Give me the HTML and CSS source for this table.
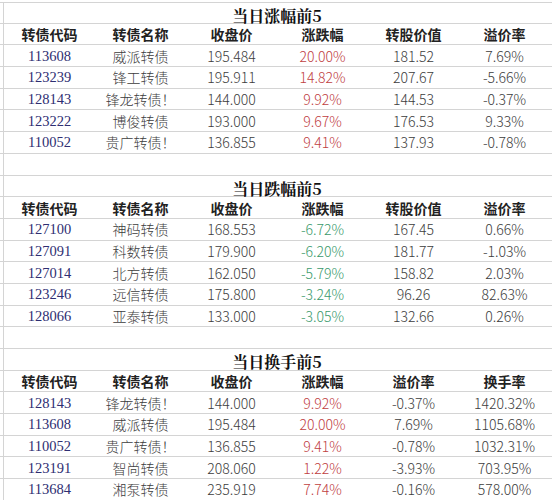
FILE: index.html
```html
<!DOCTYPE html>
<html lang="zh-CN">
<head>
<meta charset="utf-8">
<title>可转债排行</title>
<link rel="stylesheet" href="styles.css">
</head>
<body>
<div class="sheet">
  <div class="row title-row"><div class="gap"></div><div class="title">当日涨幅前5</div></div>
  <div class="row head"><div class="gap"></div><div>转债代码</div><div>转债名称</div><div>收盘价</div><div>涨跌幅</div><div>转股价值</div><div>溢价率</div></div>
  <div class="row"><div class="gap"></div><div class="code">113608</div><div>威派转债</div><div>195.484</div><div class="up">20.00%</div><div>181.52</div><div>7.69%</div></div>
  <div class="row"><div class="gap"></div><div class="code">123239</div><div>锋工转债</div><div>195.911</div><div class="up">14.82%</div><div>207.67</div><div>-5.66%</div></div>
  <div class="row"><div class="gap"></div><div class="code">128143</div><div>锋龙转债！</div><div>144.000</div><div class="up">9.92%</div><div>144.53</div><div>-0.37%</div></div>
  <div class="row"><div class="gap"></div><div class="code">123222</div><div>博俊转债</div><div>193.000</div><div class="up">9.67%</div><div>176.53</div><div>9.33%</div></div>
  <div class="row"><div class="gap"></div><div class="code">110052</div><div>贵广转债！</div><div>136.855</div><div class="up">9.41%</div><div>137.93</div><div>-0.78%</div></div>
  <div class="row blank"><div class="gap"></div></div>

  <div class="row title-row"><div class="gap"></div><div class="title">当日跌幅前5</div></div>
  <div class="row head"><div class="gap"></div><div>转债代码</div><div>转债名称</div><div>收盘价</div><div>涨跌幅</div><div>转股价值</div><div>溢价率</div></div>
  <div class="row"><div class="gap"></div><div class="code">127100</div><div>神码转债</div><div>168.553</div><div class="down">-6.72%</div><div>167.45</div><div>0.66%</div></div>
  <div class="row"><div class="gap"></div><div class="code">127091</div><div>科数转债</div><div>179.900</div><div class="down">-6.20%</div><div>181.77</div><div>-1.03%</div></div>
  <div class="row"><div class="gap"></div><div class="code">127014</div><div>北方转债</div><div>162.050</div><div class="down">-5.79%</div><div>158.82</div><div>2.03%</div></div>
  <div class="row"><div class="gap"></div><div class="code">123246</div><div>远信转债</div><div>175.800</div><div class="down">-3.24%</div><div>96.26</div><div>82.63%</div></div>
  <div class="row"><div class="gap"></div><div class="code">128066</div><div>亚泰转债</div><div>133.000</div><div class="down">-3.05%</div><div>132.66</div><div>0.26%</div></div>
  <div class="row blank"><div class="gap"></div></div>

  <div class="row title-row"><div class="gap"></div><div class="title">当日换手前5</div></div>
  <div class="row head"><div class="gap"></div><div>转债代码</div><div>转债名称</div><div>收盘价</div><div>涨跌幅</div><div>溢价率</div><div>换手率</div></div>
  <div class="row"><div class="gap"></div><div class="code">128143</div><div>锋龙转债！</div><div>144.000</div><div class="up">9.92%</div><div>-0.37%</div><div>1420.32%</div></div>
  <div class="row"><div class="gap"></div><div class="code">113608</div><div>威派转债</div><div>195.484</div><div class="up">20.00%</div><div>7.69%</div><div>1105.68%</div></div>
  <div class="row"><div class="gap"></div><div class="code">110052</div><div>贵广转债！</div><div>136.855</div><div class="up">9.41%</div><div>-0.78%</div><div>1032.31%</div></div>
  <div class="row"><div class="gap"></div><div class="code">123191</div><div>智尚转债</div><div>208.060</div><div class="up">1.22%</div><div>-3.93%</div><div>703.95%</div></div>
  <div class="row"><div class="gap"></div><div class="code">113684</div><div>湘泵转债</div><div>235.919</div><div class="up">7.74%</div><div>-0.16%</div><div>578.00%</div></div>
</div>
</body>
</html>
```
FILE: styles.css
```css
* { box-sizing: border-box; }
html, body {
  margin: 0;
  padding: 0;
  background: #ffffff;
}
body {
  font-family: "Noto Sans CJK SC", "Noto Sans", sans-serif;
  font-size: 14px;
  font-weight: 300;
  color: #3c3c3c;
}
.sheet {
  width: 552px;
  padding-top: 2px;
}
.row {
  display: grid;
  grid-template-columns: 4px repeat(6, 91px) 1fr;
  height: 21.7px;
  border-bottom: 1px solid #d4d4d4;
  align-items: center;
  text-align: center;
  line-height: 20px;
  white-space: nowrap;
}
.row:first-child {
  border-top: 1px solid #d4d4d4;
}
.gap {
  align-self: stretch;
  border-right: 1px solid #d4d4d4;
}
.title-row .title {
  grid-column: 2 / 8;
  font-family: "Noto Serif CJK SC", "Noto Sans CJK SC", serif;
  font-weight: bold;
  font-size: 16px;
  color: #111111;
  padding-top: 3px;
}
.head div {
  font-weight: bold;
  color: #222222;
}
.code {
  font-family: "Liberation Serif", "Noto Sans CJK SC", serif;
  font-weight: normal;
  font-size: 14.5px;
  color: #2e2e72;
}
.up { color: #c0403f; }
.down { color: #3a9a6c; }
```
